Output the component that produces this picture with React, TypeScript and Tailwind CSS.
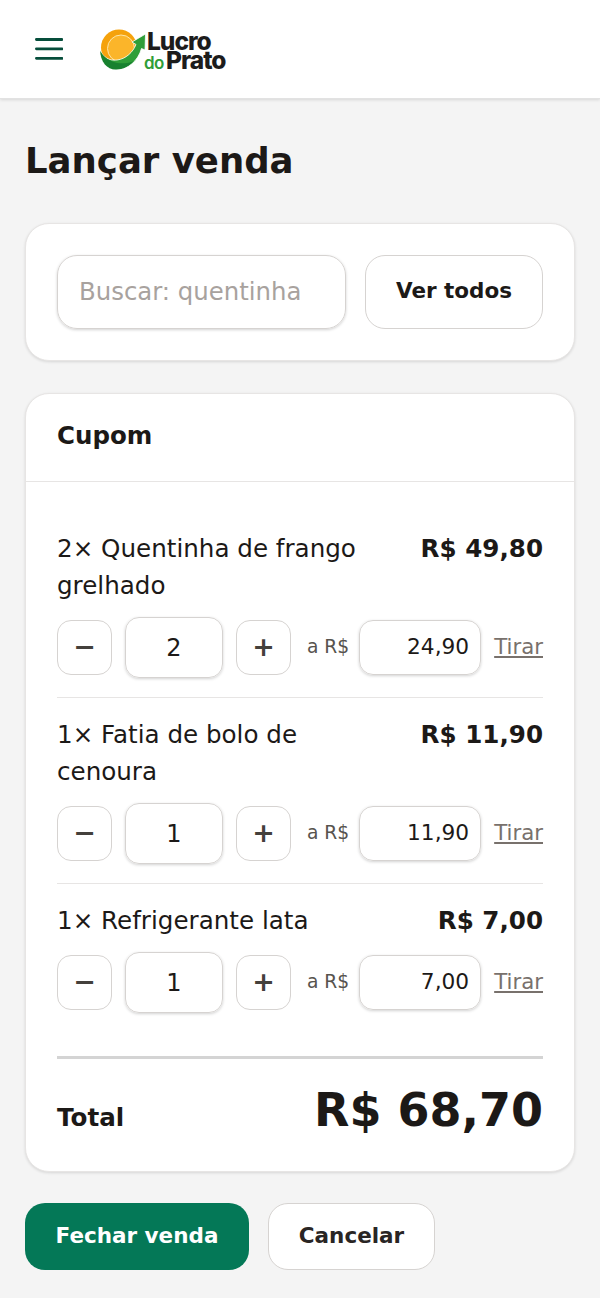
const items = [
  { name: '2× Quentinha de frango grelhado', total: 'R$ 49,80', qty: '2', price: '24,90' },
  { name: '1× Fatia de bolo de cenoura', total: 'R$ 11,90', qty: '1', price: '11,90' },
  { name: '1× Refrigerante lata', total: 'R$ 7,00', qty: '1', price: '7,00' },
];

function Logo() {
  return (
    <div className="flex items-start h-[42px] mt-[1px]">
      <svg width="47" height="42" viewBox="0 0 47 42" className="shrink-0">
        <circle cx="20" cy="18.5" r="18" fill="#f5a20c" />
        <circle cx="22" cy="19.5" r="13.5" fill="#fbb52a" stroke="#fde6a8" strokeWidth="1" />
        <path d="M1 21 C1 33 8 40.5 17 40.5 C29 40.5 39 32 42.5 19.5 L46 21 L46.5 5 L33 13 L37 15.5 C34 23 27 30 18 31 C10 32 4 28 1 21 Z" fill="#2f9e38" stroke="#fff" strokeWidth="0.8" />
        <path d="M1.2 22 C2 33 8 40.5 17 40.5 C24 40.5 30 37 35 32 C26 36 9 36 1.2 22 Z" fill="#17812f" />
      </svg>
      <div className="font-['Inter',sans-serif] text-[#1c1c1c] pt-[3px]">
        <div className="ml-[1px] font-extrabold text-[24.5px] leading-[19px] tracking-[-1px]">Lucro</div>
        <div className="flex items-baseline">
          <span className="-ml-[2px] w-[22px] font-semibold text-[17px] leading-[18px] tracking-[-0.5px] text-[#2f9e38]">do</span>
          <span className="font-extrabold text-[24.5px] leading-[18px] tracking-[-1px]">Prato</span>
        </div>
      </div>
    </div>
  );
}

function StepButton({ label }: { label: string }) {
  return (
    <button className="w-[55px] h-[55px] shrink-0 rounded-[14px] border border-[#d6d3d1] bg-white text-[#44403c] text-[27px] font-bold flex items-center justify-center">
      {label}
    </button>
  );
}

export default function App() {
  return (
    <div className="min-h-[1298px] bg-[#f4f4f4] font-['DejaVu_Sans',sans-serif] text-[#1c1917]">
      <header className="h-[99px] bg-white border-b border-[#e2e2e2] shadow-[0_1px_3px_rgba(0,0,0,0.12)] flex items-center pl-[35px] gap-[36px]">
        <svg width="28" height="22" viewBox="0 0 28 22" className="shrink-0">
          <path d="M1.4 1.5H27M1.4 10.8H27M1.4 20.3H27" stroke="#064e3b" strokeWidth="2.8" strokeLinecap="round" />
        </svg>
        <Logo />
      </header>

      <main className="px-[25px] pt-[38px]">
        <h1 className="text-[35.5px] leading-[48px] font-bold">Lançar venda</h1>

        <section className="mt-[38px] bg-white rounded-[24px] border border-[#e7e5e4] shadow-[0_1px_3px_rgba(0,0,0,0.12)] p-[31px] flex gap-[19px]">
          <div className="w-[289px] h-[74px] rounded-[20px] border border-[#d6d3d1] shadow-[0_1px_3px_rgba(0,0,0,0.18)] pl-[21px] flex items-center text-[24.4px] text-[#a8a29e]">
            Buscar: quentinha
          </div>
          <button className="w-[178px] h-[74px] rounded-[20px] border border-[#d6d3d1] text-[21.5px] leading-[30px] pb-[2px] font-bold">Ver todos</button>
        </section>

        <section className="mt-[32px] bg-white rounded-[24px] border border-[#e7e5e4] shadow-[0_1px_3px_rgba(0,0,0,0.12)]">
          <div className="h-[88px] px-[31px] pb-[2px] flex items-center border-b border-[#e7e5e4] text-[24.5px] font-bold">Cupom</div>
          <div className="px-[31px] pt-[48px]">
            {items.map((item, i) => (
              <div key={item.name} className={i < 2 ? 'border-b border-[#e7e5e4] pb-[19px] mb-[18px]' : ''}>
                <div className="flex justify-between gap-[40px] text-[24.6px] leading-[37px]">
                  <span>{item.name}</span>
                  <span className="font-bold whitespace-nowrap">{item.total}</span>
                </div>
                <div className="mt-[13px] flex items-center">
                  <StepButton label="−" />
                  <div className="ml-[13px] w-[98px] h-[61px] rounded-[14px] border border-[#d6d3d1] shadow-[0_1px_3px_rgba(0,0,0,0.18)] flex items-center justify-center text-[24px]">{item.qty}</div>
                  <div className="ml-[13px]"><StepButton label="+" /></div>
                  <span className="ml-[16px] text-[18.7px] text-[#57534e] whitespace-nowrap">a R$</span>
                  <div className="ml-[10px] w-[122px] h-[55px] rounded-[14px] border border-[#d6d3d1] shadow-[0_1px_3px_rgba(0,0,0,0.18)] flex items-center justify-end pr-[11px] text-[21.7px]">{item.price}</div>
                  <a className="ml-[13px] mb-[2px] text-[21.3px] leading-[26px] text-[#78716c] underline underline-offset-2">Tirar</a>
                </div>
              </div>
            ))}
            <div className="mt-[43px] border-t-[3px] border-[#d4d4d4] h-[115px] pt-[23px] flex items-baseline justify-between">
              <span className="text-[24.6px] font-bold">Total</span>
              <span className="text-[46px] leading-[56px] font-bold">R$ 68,70</span>
            </div>
          </div>
        </section>

        <div className="mt-[31px] flex gap-[19px]">
          <button className="w-[224px] h-[67px] rounded-[20px] bg-[#047857] text-white text-[21.5px] font-bold">Fechar venda</button>
          <button className="w-[167px] h-[67px] rounded-[20px] bg-white border border-[#d6d3d1] text-[21.5px] font-bold text-[#292524]">Cancelar</button>
        </div>
      </main>
    </div>
  );
}
